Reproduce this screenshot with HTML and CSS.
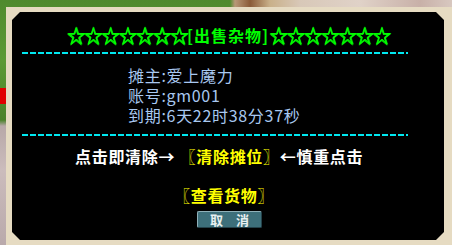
FILE: index.html
```html
<!DOCTYPE html>
<html>
<head>
<meta charset="utf-8">
<link rel="stylesheet" href="styles.css">
</head>
<body>
<div class="scene">
  <div class="mark"></div>
  <div class="frame">
    <span class="corner tl"></span>
    <span class="corner tr"></span>
    <span class="corner bl"></span>
    <span class="corner br"></span>
    <div class="panel">
      <div class="title"><span class="stars">☆☆☆☆☆☆☆</span>[出售杂物]<span class="stars">☆☆☆☆☆☆☆</span></div>
      <div class="dash"></div>
      <div class="info">
        <div class="row"><span class="cell">摊主:爱上魔力</span></div>
        <div class="row"><span class="cell">账号:gm001</span></div>
        <div class="row"><span class="cell">到期:6天22时38分37秒</span></div>
      </div>
      <div class="dash dash2"></div>
      <div class="action"><span class="white">点击即清除→</span> <span class="yellow">〖清除摊位〗</span><span class="white">←慎重点击</span></div>
      <div class="view"><span class="yellow">〖查看货物〗</span></div>
      <div class="btnrow"><div class="btn">取　消</div></div>
    </div>
  </div>
</div>
</body>
</html>
```
FILE: styles.css
```css
html, body {
  margin: 0;
  padding: 0;
}
body {
  width: 452px;
  height: 245px;
  overflow: hidden;
  background:
    linear-gradient(90deg, transparent 0, transparent 230px, #b89878 235px, #8a5a38 250px, #c9b08a 270px, #d8c8b8 300px, #e0d2c8 360px, #c8b0a8 420px, #d8c8c0 452px) top / 452px 8px no-repeat,
    linear-gradient(180deg, #4f8a2e 0, #5c9a35 60px, #4a8229 120px, #b8a8a8 126px, #cbbcbc 170px, #b9a9ab 245px);
  font-family: "Noto Sans CJK SC", sans-serif;
}
.scene {
  position: relative;
  padding: 7px 0 0 6px;
}
.mark {
  position: absolute;
  left: 0;
  top: 88px;
  width: 6px;
  height: 16px;
  background: #e00000;
}
.frame {
  position: relative;
  width: 432px;
  height: 228px;
  border-style: solid;
  border-width: 5px 8px 5px 6px;
  border-color: #e6dbc2;
  box-shadow: inset 0 0 0 1px #a89a80;
}
.panel {
  width: 432px;
  height: 228px;
  background: #000;
  display: flex;
  flex-direction: column;
  box-sizing: border-box;
  padding-top: 13px;
}
.corner {
  position: absolute;
  width: 0;
  height: 0;
  z-index: 2;
}
.corner.tl {
  left: 0;
  top: 0;
  border-top: 8px solid #e6dbc2;
  border-right: 8px solid transparent;
}
.corner.tr {
  right: 0;
  top: 0;
  border-top: 8px solid #e6dbc2;
  border-left: 8px solid transparent;
}
.corner.bl {
  left: 0;
  bottom: 0;
  border-bottom: 8px solid #e6dbc2;
  border-right: 8px solid transparent;
}
.corner.br {
  right: 0;
  bottom: 0;
  border-bottom: 8px solid #e6dbc2;
  border-left: 8px solid transparent;
}
.title {
  color: #00ff00;
  font-size: 16px;
  line-height: 20px;
  height: 20px;
  font-weight: bold;
  text-align: center;
  letter-spacing: 1px;
  white-space: nowrap;
}
.stars {
  font-size: 19px;
  letter-spacing: -1.8px;
  text-shadow: 0.6px 0 #00ff00, 0 0.6px #00ff00;
  vertical-align: -1px;
}
.dash {
  margin: 7px 0 0 10px;
  width: 386px;
  height: 2px;
  background: repeating-linear-gradient(90deg, #00e8f0 0, #00e8f0 6px, transparent 6px, transparent 8px);
}
.info {
  margin: 11px 0 0 116px;
  color: #a8c8f0;
  font-size: 16px;
  line-height: 20px;
  letter-spacing: 0.7px;
}
.row {
  height: 20px;
  display: flex;
  align-items: center;
  white-space: nowrap;
}
.cell {
  display: block;
  height: 20px;
  line-height: 20px;
}
.dash2 {
  margin-top: 9px;
}
.action {
  margin: 10px 0 0 63px;
  font-size: 16px;
  line-height: 20px;
  height: 20px;
  white-space: nowrap;
  font-weight: bold;
  letter-spacing: 0.7px;
}
.white { color: #ffffff; }
.yellow { color: #ffff00; }
.view {
  margin: 19px 0 0 162px;
  font-size: 16px;
  line-height: 20px;
  height: 20px;
  font-weight: bold;
  white-space: nowrap;
  letter-spacing: 0.7px;
}
.btnrow {
  display: flex;
  justify-content: flex-start;
  padding-left: 185px;
  margin-top: 6px;
}
.btn {
  width: 63px;
  height: 15px;
  background: #3d6f7a;
  border: 1px solid #8fb0b8;
  border-right-color: #24424a;
  border-bottom-color: #24424a;
  border-radius: 2px;
  color: #e8f0f0;
  font-size: 13px;
  line-height: 15px;
  font-weight: bold;
  text-align: center;
}
```
